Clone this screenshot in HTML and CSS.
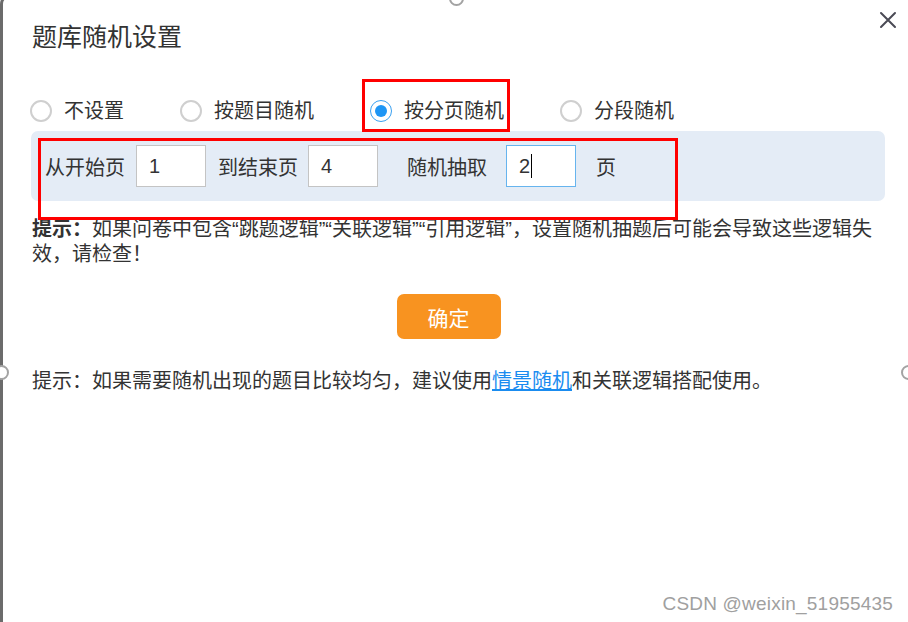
FILE: index.html
```html
<!DOCTYPE html>
<html lang="zh-CN">
<head>
<meta charset="utf-8">
<title>题库随机设置</title>
<link rel="stylesheet" href="styles.css">
</head>
<body>
<div class="frame">
  <div class="frame-edge"></div>
  <span class="handle handle-top"></span>
  <span class="handle handle-left"></span>
  <span class="handle handle-right"></span>

  <div class="dialog">
    <div class="header">
      <h1 class="title">题库随机设置</h1>
      <button class="close" aria-label="关闭">
        <svg width="18" height="18" viewBox="0 0 18 18"><path d="M2 2 L16 16 M16 2 L2 16" stroke="#4a4a55" stroke-width="2" fill="none" stroke-linecap="round"/></svg>
      </button>
    </div>

    <div class="radios">
      <label class="radio"><span class="dot"></span><span>不设置</span></label>
      <label class="radio"><span class="dot"></span><span>按题目随机</span></label>
      <label class="radio checked"><span class="dot"></span><span>按分页随机</span></label>
      <label class="radio"><span class="dot"></span><span>分段随机</span></label>
    </div>

    <div class="panel">
      <span class="plabel pl-1">从开始页</span>
      <div class="field f-1">1</div>
      <span class="plabel pl-2">到结束页</span>
      <div class="field f-2">4</div>
      <span class="plabel pl-3">随机抽取</span>
      <div class="field field-focus f-3">2<span class="caret"></span></div>
      <span class="plabel">页</span>
    </div>

    <p class="tip"><b>提示：</b>如果问卷中包含“跳题逻辑”“关联逻辑”“引用逻辑”，设置随机抽题后可能会导致这些逻辑失效，请检查！</p>

    <div class="actions"><button class="ok">确定</button></div>

    <p class="tip2">提示：如果需要随机出现的题目比较均匀，建议使用<a href="#" class="link">情景随机</a>和关联逻辑搭配使用。</p>
  </div>

  <div class="mark mark-1"></div>
  <div class="mark mark-2"></div>
  <div class="watermark">CSDN @weixin_51955435</div>
</div>
</body>
</html>
```

FILE: styles.css
```css
* { box-sizing: border-box; }
html, body {
  margin: 0;
  padding: 0;
  background: #fff;
}
body {
  font-family: "Liberation Sans", "Noto Sans CJK SC", sans-serif;
  color: #333;
  overflow: hidden;
}
.frame {
  position: relative;
  width: 908px;
  height: 622px;
  overflow: hidden;
}
.frame-edge {
  position: absolute;
  left: 0;
  top: -6px;
  width: 40px;
  height: 700px;
  border-left: 3px solid #6b6b6b;
  border-top: 3px solid #6b6b6b;
  border-top-left-radius: 10px;
}
.handle {
  position: absolute;
  width: 15px;
  height: 15px;
  border-radius: 50%;
  border: 2px solid #a3a3a3;
  background: #fff;
}
.handle-top { left: 449px; top: -9px; }
.handle-left { left: -6px; top: 365px; }
.handle-right { left: 901px; top: 365px; }

.dialog {
  padding: 22px 23px 0 32px;
}
.header {
  display: flex;
  justify-content: space-between;
  align-items: flex-start;
}
.title {
  margin: 0;
  font-size: 25px;
  line-height: 30px;
  font-weight: normal;
  color: #333;
}
.close {
  border: 0;
  background: none;
  padding: 0;
  margin: -11px -12px 0 0;
  width: 18px;
  height: 18px;
  cursor: pointer;
}
.close svg { display: block; }

.radios {
  display: flex;
  gap: 56px;
  margin-top: 44px;
  margin-left: -2px;
  font-size: 20px;
  line-height: 30px;
}
.radio {
  display: flex;
  align-items: center;
  gap: 12px;
}
.dot {
  width: 22px;
  height: 22px;
  border-radius: 50%;
  border: 2px solid #cfcfcf;
  background: #fff;
  position: relative;
}
.radio.checked .dot {
  border-color: #3aa0f0;
  border-width: 1.5px;
}
.radio.checked .dot::after {
  content: "";
  position: absolute;
  left: 50%;
  top: 50%;
  width: 12px;
  height: 12px;
  margin: -6px 0 0 -6px;
  border-radius: 50%;
  background: #1e96f5;
}

.panel {
  margin-top: 5px;
  margin-left: -1px;
  width: 854px;
  height: 70px;
  background: #e4ecf6;
  border-radius: 7px;
  display: flex;
  align-items: center;
  padding-left: 14px;
  font-size: 20px;
}
.plabel { color: #333; }
.pl-1 { margin-right: 11px; }
.pl-2 { margin-right: 10px; }
.pl-3 { margin-right: 19px; }
.field {
  width: 70px;
  height: 42px;
  background: #fff;
  border: 1px solid #c4c4c4;
  display: flex;
  align-items: center;
  padding-left: 12px;
  font-size: 20px;
  color: #333;
}
.f-1 { margin-right: 12px; }
.f-2 { margin-right: 29px; }
.f-3 { margin-right: 20px; }
.field-focus { border-color: #66b4ee; }
.caret {
  display: inline-block;
  width: 1px;
  height: 24px;
  background: #000;
  margin-left: 1px;
}

.tip {
  margin: 16px 0 0 0;
  font-size: 20px;
  line-height: 25px;
  width: 853px;
  color: #333;
}
.tip b { font-weight: bold; }

.actions {
  display: flex;
  justify-content: center;
  margin-top: 27px;
  padding-right: 20px;
}
.ok {
  width: 104px;
  height: 45px;
  border: 0;
  border-radius: 7px;
  background: #f89320;
  color: #fff;
  font-family: inherit;
  font-size: 21px;
  cursor: pointer;
}

.tip2 {
  margin: 30px 0 0 0;
  font-size: 20px;
  line-height: 25px;
  color: #333;
}
.link {
  color: #1a8cf0;
  text-decoration: underline;
}

.mark {
  position: absolute;
  border: 3px solid #f00;
  pointer-events: none;
}
.mark-1 { left: 362px; top: 79px; width: 148px; height: 53px; }
.mark-2 { left: 38px; top: 138px; width: 640px; height: 82px; }

.watermark {
  position: absolute;
  right: 15px;
  bottom: 7px;
  font-family: "Liberation Sans", sans-serif;
  font-size: 19px;
  color: #a0a0a0;
  letter-spacing: 0.2px;
}
```
